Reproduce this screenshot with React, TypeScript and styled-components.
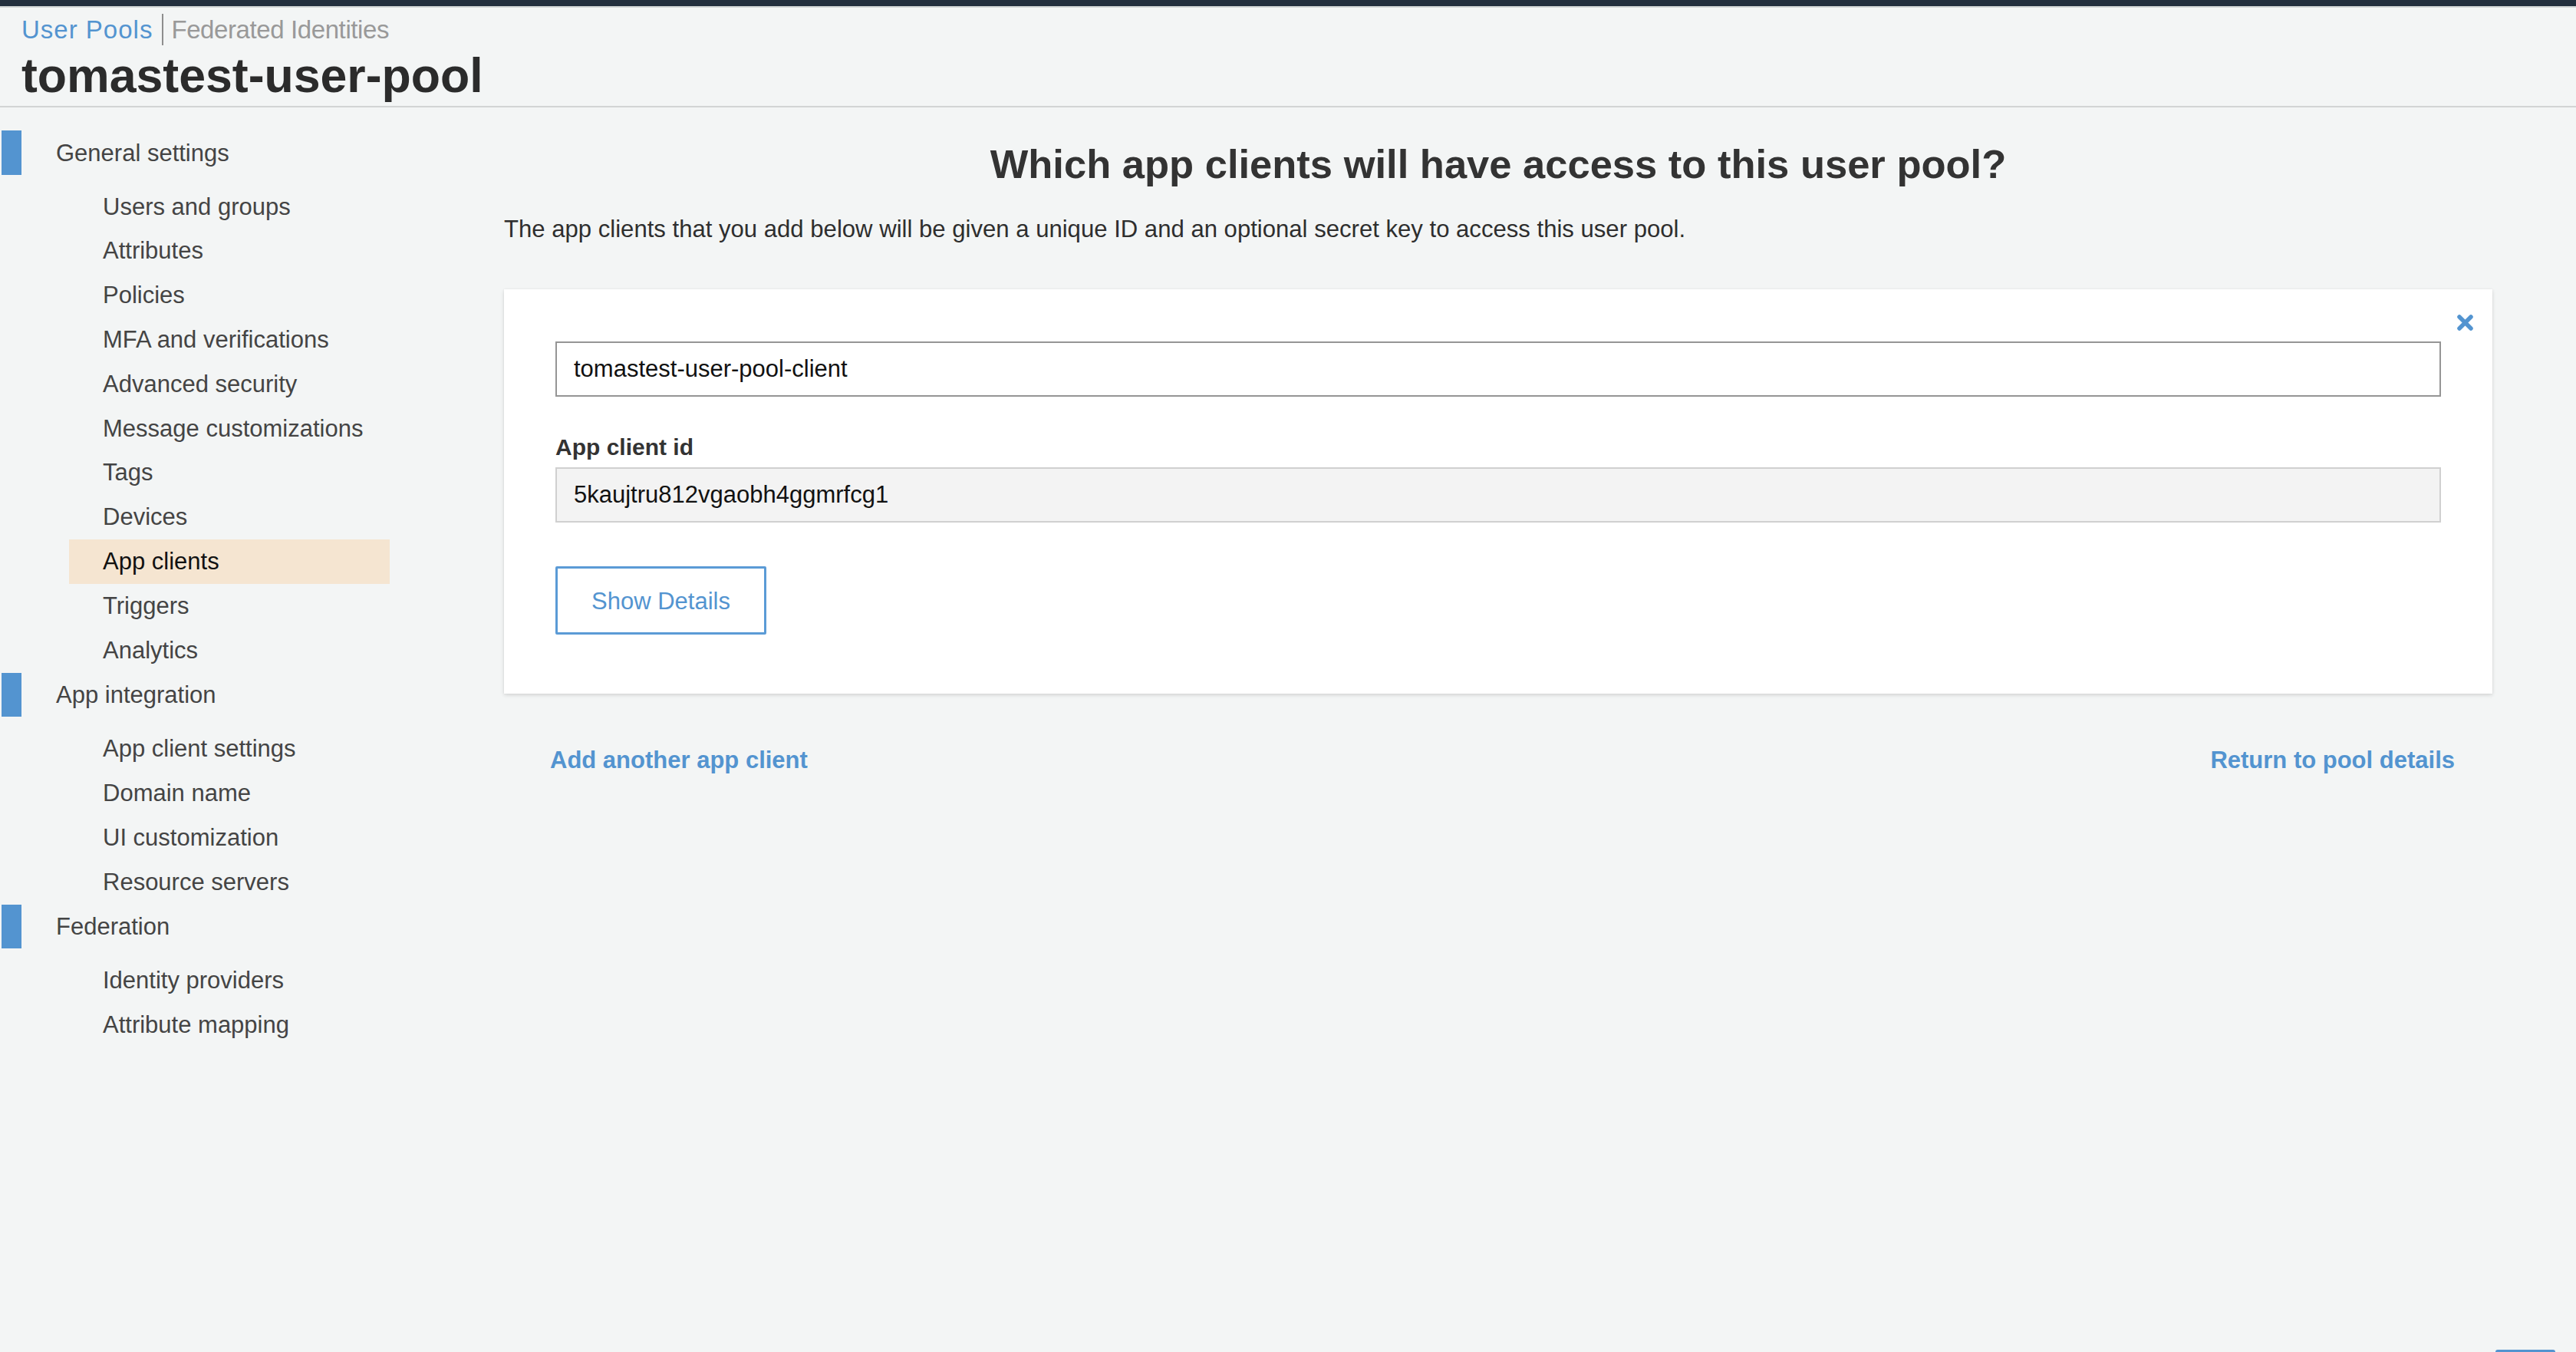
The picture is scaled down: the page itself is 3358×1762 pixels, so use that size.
import React from "react";
import styled, { createGlobalStyle } from "styled-components";

const Global = createGlobalStyle`
  html, body {
    margin: 0;
    padding: 0;
    background: #f3f5f5;
    font-family: "Liberation Sans", Arial, Helvetica, sans-serif;
  }
  * { box-sizing: border-box; }
`;

const Page = styled.div`
  min-height: 1762px;
  background: #f3f5f5;
  color: #333;
`;

const TopBar = styled.div`
  height: 10px;
  background: #232f3e;
  border-bottom: 2px solid #d3d6d6;
`;

const Header = styled.header`
  padding: 8px 0 6px 28px;
  border-bottom: 2px solid #d2d4d4;
`;

const Tabs = styled.nav`
  display: flex;
  align-items: stretch;
  height: 41px;
`;

const Tab = styled.a<{ $active?: boolean }>`
  font-size: 33px;
  line-height: 41px;
  color: ${(p) => (p.$active ? "#5394d0" : "#999")};
  text-decoration: none;
  padding: ${(p) => (p.$active ? "0 12px 0 0" : "0 0 0 10px")};
  border-left: ${(p) => (p.$active ? "none" : "2px solid #8e8e8e")};
  letter-spacing: ${(p) => (p.$active ? "1px" : "-0.4px")};
`;

const PoolTitle = styled.h1`
  margin: 5px 0 0 0;
  font-size: 62.6px;
  line-height: 68px;
  font-weight: 700;
  color: #2b2b2b;
`;

const Body = styled.div`
  display: flex;
  align-items: flex-start;
`;

const Sidebar = styled.aside`
  width: 508px;
  flex: none;
  padding: 30px 0 0 2px;
`;

const Group = styled.div``;

const GroupHeader = styled.div`
  display: flex;
  align-items: center;
  height: 57.8px;
  font-size: 31px;
  color: #444;
  &::before {
    content: "";
    align-self: stretch;
    width: 26px;
    background: #5394d0;
    margin-right: 45px;
  }
`;

const GroupLabel = styled.span`
  padding-top: 2px;
`;

const ItemList = styled.ul`
  list-style: none;
  margin: 13px 0 0 0;
  padding: 0;
`;

const Item = styled.li<{ $active?: boolean }>`
  display: flex;
  align-items: center;
  height: 57.8px;
  margin-left: 88px;
  padding-left: 44px;
  font-size: 31px;
  color: ${(p) => (p.$active ? "#111" : "#444")};
  background: ${(p) => (p.$active ? "#f5e5d1" : "transparent")};
`;

const Main = styled.main`
  flex: 1;
  padding: 43px 109px 0 149px;
`;

const Title = styled.h2`
  margin: 0;
  text-align: center;
  font-size: 52.5px;
  line-height: 62px;
  font-weight: 700;
  color: #333;
`;

const Intro = styled.p`
  margin: 36px 0 0 0;
  font-size: 31.1px;
  line-height: 36px;
  color: #2e2e2e;
`;

const Card = styled.section`
  position: relative;
  margin-top: 60px;
  background: #fff;
  padding: 68px 67px 77px 67px;
  box-shadow: 0 2px 5px rgba(0, 0, 0, 0.13), 0 0 2px rgba(0, 0, 0, 0.06);
`;

const CloseButton = styled.button`
  position: absolute;
  top: 32px;
  right: 24px;
  width: 23px;
  height: 23px;
  padding: 0;
  border: none;
  background: none;
  display: flex;
  cursor: pointer;
`;

const NameInput = styled.input`
  display: block;
  width: 100%;
  height: 72px;
  border: 2px solid #959595;
  border-radius: 0;
  padding: 0 22px;
  font-family: "Liberation Sans", Arial, sans-serif;
  font-size: 31px;
  color: #111;
  background: #fff;
  outline: none;
`;

const Label = styled.div`
  margin-top: 48px;
  font-size: 30px;
  line-height: 36px;
  font-weight: 700;
  color: #333;
`;

const ReadOnlyField = styled.div`
  margin-top: 8px;
  height: 72px;
  display: flex;
  align-items: center;
  padding: 0 22px;
  background: #f3f3f3;
  border: 2px solid #d0d0d0;
  font-size: 31px;
  color: #111;
`;

const OutlineButton = styled.button`
  display: block;
  margin-top: 57px;
  width: 275px;
  height: 89px;
  border: 3px solid #5b9bd6;
  border-radius: 2px;
  background: #fff;
  color: #5394d0;
  font-family: "Liberation Sans", Arial, sans-serif;
  font-size: 31px;
  padding-top: 3px;
  cursor: pointer;
`;

const LinkRow = styled.div`
  margin-top: 69px;
  display: flex;
  justify-content: space-between;
  padding: 0 49px 0 60px;
`;

const ActionLink = styled.a`
  font-size: 31px;
  line-height: 36px;
  font-weight: 700;
  color: #5394d0;
  text-decoration: none;
`;

const FeedbackTab = styled.div`
  position: fixed;
  right: 27px;
  bottom: 0;
  width: 78px;
  height: 3px;
  background: #5394d0;
  border-radius: 4px 4px 0 0;
`;

const groups = [
  {
    title: "General settings",
    items: [
      "Users and groups",
      "Attributes",
      "Policies",
      "MFA and verifications",
      "Advanced security",
      "Message customizations",
      "Tags",
      "Devices",
      "App clients",
      "Triggers",
      "Analytics",
    ],
  },
  {
    title: "App integration",
    items: ["App client settings", "Domain name", "UI customization", "Resource servers"],
  },
  {
    title: "Federation",
    items: ["Identity providers", "Attribute mapping"],
  },
];

export default function App() {
  return (
    <Page>
      <Global />
      <TopBar />
      <Header>
        <Tabs>
          <Tab $active href="#">User Pools</Tab>
          <Tab href="#">Federated Identities</Tab>
        </Tabs>
        <PoolTitle>tomastest-user-pool</PoolTitle>
      </Header>
      <Body>
        <Sidebar>
          {groups.map((g) => (
            <Group key={g.title}>
              <GroupHeader>
                <GroupLabel>{g.title}</GroupLabel>
              </GroupHeader>
              <ItemList>
                {g.items.map((it) => (
                  <Item key={it} $active={it === "App clients"}>
                    {it}
                  </Item>
                ))}
              </ItemList>
            </Group>
          ))}
        </Sidebar>
        <Main>
          <Title>Which app clients will have access to this user pool?</Title>
          <Intro>
            The app clients that you add below will be given a unique ID and an optional secret key to access this user pool.
          </Intro>
          <Card>
            <CloseButton aria-label="Remove">
              <svg width="23" height="23" viewBox="0 0 23 23">
                <path
                  d="M4 4 L19 19 M19 4 L4 19"
                  stroke="#5394d0"
                  strokeWidth="5.5"
                  strokeLinecap="round"
                />
              </svg>
            </CloseButton>
            <NameInput defaultValue="tomastest-user-pool-client" />
            <Label>App client id</Label>
            <ReadOnlyField>5kaujtru812vgaobh4ggmrfcg1</ReadOnlyField>
            <OutlineButton>Show Details</OutlineButton>
          </Card>
          <LinkRow>
            <ActionLink href="#">Add another app client</ActionLink>
            <ActionLink href="#">Return to pool details</ActionLink>
          </LinkRow>
        </Main>
      </Body>
      <FeedbackTab />
    </Page>
  );
}
